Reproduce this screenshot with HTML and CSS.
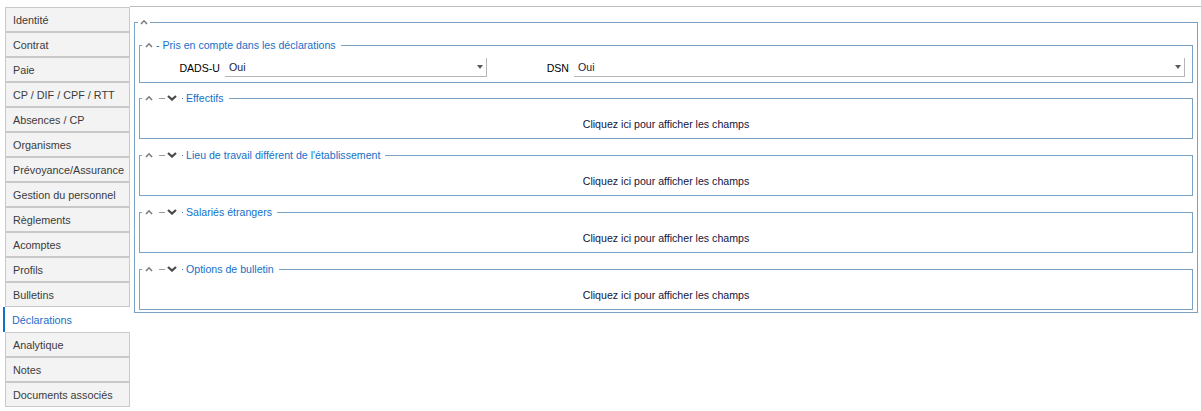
FILE: index.html
```html
<!DOCTYPE html>
<html lang="fr">
<head>
<meta charset="utf-8">
<title>Déclarations</title>
<link rel="stylesheet" href="styles.css">
</head>
<body>
<div class="app">
  <nav class="tabs">
    <div class="tab">Identité</div>
    <div class="tab">Contrat</div>
    <div class="tab">Paie</div>
    <div class="tab">CP / DIF / CPF / RTT</div>
    <div class="tab">Absences / CP</div>
    <div class="tab">Organismes</div>
    <div class="tab">Prévoyance/Assurance</div>
    <div class="tab">Gestion du personnel</div>
    <div class="tab">Règlements</div>
    <div class="tab">Acomptes</div>
    <div class="tab">Profils</div>
    <div class="tab">Bulletins</div>
    <div class="tab active">Déclarations</div>
    <div class="tab">Analytique</div>
    <div class="tab">Notes</div>
    <div class="tab">Documents associés</div>
  </nav>
  <main class="panel">
    <section class="group outer">
      <div class="head">
        <span class="hd hd-outer"><svg class="up" width="8" height="6" viewBox="0 0 8 6"><polyline points="1,5 4,1.8 7,5"/></svg></span>
      </div>

      <section class="group sub first">
        <div class="head">
          <span class="hd"><svg class="up" width="8" height="6" viewBox="0 0 8 6"><polyline points="1,5 4,1.8 7,5"/></svg><span class="title title-first">- Pris en compte dans les déclarations</span></span>
        </div>
        <div class="fields">
          <span class="lbl">DADS-U</span>
          <div class="combo"><span class="val">Oui</span><i class="arrow"></i></div>
          <span class="lbl">DSN</span>
          <div class="combo"><span class="val">Oui</span><i class="arrow"></i></div>
        </div>
      </section>

      <section class="group sub collapsed">
        <div class="head">
          <span class="hd"><svg class="up" width="8" height="6" viewBox="0 0 8 6"><polyline points="1,5 4,1.8 7,5"/></svg><i class="dash"></i><svg class="down" width="10" height="6" viewBox="0 0 10 6"><polyline points="1,1 5,4.6 9,1"/></svg><i class="dot"></i><span class="title">Effectifs</span></span>
        </div>
        <div class="hint">Cliquez ici pour afficher les champs</div>
      </section>

      <section class="group sub collapsed">
        <div class="head">
          <span class="hd"><svg class="up" width="8" height="6" viewBox="0 0 8 6"><polyline points="1,5 4,1.8 7,5"/></svg><i class="dash"></i><svg class="down" width="10" height="6" viewBox="0 0 10 6"><polyline points="1,1 5,4.6 9,1"/></svg><i class="dot"></i><span class="title">Lieu de travail différent de l'établissement</span></span>
        </div>
        <div class="hint">Cliquez ici pour afficher les champs</div>
      </section>

      <section class="group sub collapsed">
        <div class="head">
          <span class="hd"><svg class="up" width="8" height="6" viewBox="0 0 8 6"><polyline points="1,5 4,1.8 7,5"/></svg><i class="dash"></i><svg class="down" width="10" height="6" viewBox="0 0 10 6"><polyline points="1,1 5,4.6 9,1"/></svg><i class="dot"></i><span class="title">Salariés étrangers</span></span>
        </div>
        <div class="hint">Cliquez ici pour afficher les champs</div>
      </section>

      <section class="group sub collapsed">
        <div class="head">
          <span class="hd"><svg class="up" width="8" height="6" viewBox="0 0 8 6"><polyline points="1,5 4,1.8 7,5"/></svg><i class="dash"></i><svg class="down" width="10" height="6" viewBox="0 0 10 6"><polyline points="1,1 5,4.6 9,1"/></svg><i class="dot"></i><span class="title">Options de bulletin</span></span>
        </div>
        <div class="hint">Cliquez ici pour afficher les champs</div>
      </section>
    </section>
  </main>
</div>
</body>
</html>
```

FILE: styles.css
```css
* { box-sizing: border-box; }

body {
  margin: 0;
  background: #ffffff;
  font-family: "Liberation Sans", Arial, sans-serif;
  font-size: 10.6px;
  color: #1a1a3a;
}

.app {
  display: flex;
  height: 411px;
  overflow: hidden;
}

/* ---------- left tabs ---------- */
.tabs {
  flex: none;
  width: 130px;
  padding: 7px 0 0 3px;
  font-size: 10.8px;
}

.tab {
  margin-left: 2px;
  height: 25px;
  border: 1px solid #c9c9c9;
  background: #f3f3f3;
  color: #3b3b3b;
  display: flex;
  align-items: center;
  padding-left: 7px;
  white-space: nowrap;
}

.tab.active {
  margin-left: 0;
  border: none;
  border-left: 2px solid #1470c4;
  background: #ffffff;
  color: #1a6fc6;
  padding-left: 7px;
}

/* ---------- main panel ---------- */
.panel {
  flex: 1;
  margin-top: 6px;
  border-top: 1px solid #bcbcbc;
  padding: 15px 3px 0 4px;
  background: #ffffff;
}

.group {
  border: 1px solid #7ba2c3;
}

.outer {
  height: 291px;
  padding: 0 4px 0 4px;
}

.head {
  display: flex;
  align-items: center;
  height: 14px;
  margin-top: -8px;
}

.outer > .head {
  height: 12px;
  margin-top: -7px;
}

.hd {
  display: flex;
  align-items: center;
  height: 100%;
  background: #ffffff;
  margin-left: 2px;
  padding: 0 5px 0 3px;
}

.hd-outer {
  margin-left: -1px;
  padding: 0 2px 0 2px;
}

svg polyline {
  fill: none;
  stroke-linecap: butt;
  stroke-linejoin: miter;
}

svg.up polyline {
  stroke: #7c7c7c;
  stroke-width: 1.6;
}

svg.down polyline {
  stroke: #4a4a4a;
  stroke-width: 2.2;
}

.dash {
  display: block;
  width: 6px;
  height: 1px;
  background: #9a9a9a;
  margin-left: 6px;
}

.down {
  margin-left: 2px;
}

.dot {
  display: block;
  width: 1px;
  height: 1px;
  background: #3b82c8;
  margin-left: 5px;
}

.title {
  color: #1470c8;
  margin-left: 3px;
  line-height: 14px;
  white-space: nowrap;
}

.title-first {
  margin-left: 3px;
}

/* ---------- first group ---------- */
.sub.first {
  margin-top: 17px;
  height: 38px;
}

.fields {
  margin-top: 6px;
  display: grid;
  grid-template-columns: 85px 262px 87px 1fr;
  padding-right: 7px;
  height: 19px;
}

.lbl {
  text-align: right;
  padding-right: 5px;
  color: #000000;
  align-self: center;
}

.combo {
  display: flex;
  align-items: center;
  height: 19px;
  border-right: 1px solid #b5b5b5;
  border-bottom: 1px solid #b5b5b5;
  padding-left: 4px;
}

.val { color: #1b1b40; }

.arrow {
  margin-left: auto;
  margin-right: 3px;
  width: 0;
  height: 0;
  border-left: 3.5px solid transparent;
  border-right: 3.5px solid transparent;
  border-top: 4px solid #5a5a5a;
}

/* ---------- collapsed groups ---------- */
.collapsed {
  height: 41px;
  margin-top: 16px;
}

.first + .collapsed {
  margin-top: 15px;
}

.hint {
  margin-top: 12px;
  line-height: 14px;
  text-align: center;
  color: #14143a;
}
```
